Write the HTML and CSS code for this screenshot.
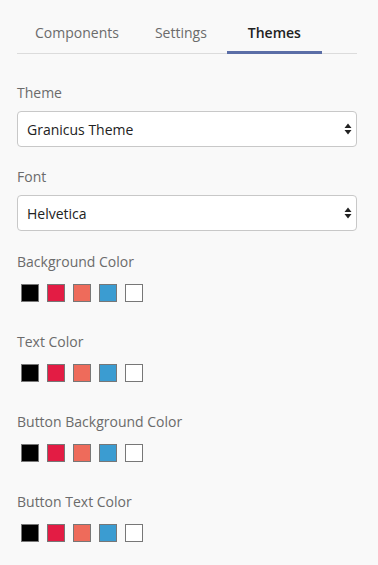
FILE: index.html
```html
<!DOCTYPE html>
<html lang="en">
<head>
  <meta charset="UTF-8">
  <meta name="viewport" content="width=device-width, initial-scale=1.0">
  <title>Themes</title>
  <link rel="stylesheet" href="styles.css">
</head>
<body>
  <div class="panel">
    <ul class="tabs">
      <li class="tab">Components</li>
      <li class="tab">Settings</li>
      <li class="tab active">Themes</li>
    </ul>

    <div class="field">
      <label class="field-label">Theme</label>
      <div class="select-wrap">
        <select class="select">
          <option>Granicus Theme</option>
        </select>
        <svg class="select-arrow" width="8" height="12" viewBox="0 0 8 12">
          <path d="M4 0.5 L7.5 5 L0.5 5 Z M4 11.5 L7.5 7 L0.5 7 Z" fill="#222"/>
        </svg>
      </div>
    </div>

    <div class="field">
      <label class="field-label">Font</label>
      <div class="select-wrap">
        <select class="select">
          <option>Helvetica</option>
        </select>
        <svg class="select-arrow" width="8" height="12" viewBox="0 0 8 12">
          <path d="M4 0.5 L7.5 5 L0.5 5 Z M4 11.5 L7.5 7 L0.5 7 Z" fill="#222"/>
        </svg>
      </div>
    </div>

    <div class="colors">
      <div class="field-label">Background Color</div>
      <div class="swatches">
        <span class="swatch black"></span>
        <span class="swatch red"></span>
        <span class="swatch salmon"></span>
        <span class="swatch blue"></span>
        <span class="swatch white"></span>
      </div>
    </div>

    <div class="colors">
      <div class="field-label">Text Color</div>
      <div class="swatches">
        <span class="swatch black"></span>
        <span class="swatch red"></span>
        <span class="swatch salmon"></span>
        <span class="swatch blue"></span>
        <span class="swatch white"></span>
      </div>
    </div>

    <div class="colors">
      <div class="field-label">Button Background Color</div>
      <div class="swatches">
        <span class="swatch black"></span>
        <span class="swatch red"></span>
        <span class="swatch salmon"></span>
        <span class="swatch blue"></span>
        <span class="swatch white"></span>
      </div>
    </div>

    <div class="colors">
      <div class="field-label">Button Text Color</div>
      <div class="swatches">
        <span class="swatch black"></span>
        <span class="swatch red"></span>
        <span class="swatch salmon"></span>
        <span class="swatch blue"></span>
        <span class="swatch white"></span>
      </div>
    </div>
  </div>
</body>
</html>
```

FILE: styles.css
```css
body {
  margin: 0;
  font-family: 'Open Sans', 'Liberation Sans', sans-serif;
  font-size: 14px;
  line-height: 20px;
  background-color: #f9f9f9;
  color: #222;
}
.panel {
  padding: 0 21px 0 17px;
}
.tabs {
  display: flex;
  list-style: none;
  margin: 0;
  padding: 0;
  border-bottom: 1px solid #dcdcdc;
}
.tab {
  padding: 23px 18px 8px;
  margin-bottom: -1px;
  border-bottom: 3px solid transparent;
  color: #6b6b6b;
}
.tab.active {
  color: #222;
  font-weight: 600;
  border-bottom-color: #5b6ea7;
  margin-left: 2px;
  padding-left: 21px;
  padding-right: 21px;
}
.field {
  margin-top: 29px;
}
.field + .field {
  margin-top: 20px;
}
.field-label {
  display: block;
  color: #6b6b6b;
}
.select-wrap {
  position: relative;
  margin-top: 8px;
}
.select {
  display: block;
  width: 100%;
  height: 36px;
  margin: 0;
  padding: 0 30px 0 9px;
  font-family: inherit;
  font-size: 14px;
  color: #222;
  background-color: #fff;
  border: 1px solid #c8c8c8;
  border-radius: 4px;
  -webkit-appearance: none;
  appearance: none;
}
.select-arrow {
  position: absolute;
  right: 5px;
  top: 12px;
  pointer-events: none;
}
.colors {
  margin-top: 21px;
}
.colors + .colors {
  margin-top: 30px;
}
.swatches {
  display: flex;
  gap: 8px;
  margin-top: 12px;
  padding-left: 4px;
}
.swatch {
  width: 16px;
  height: 16px;
  border: 1px solid #777;
}
.black { background-color: #000; }
.red { background-color: #e31c44; }
.salmon { background-color: #ee6b5b; }
.blue { background-color: #3b9cd1; }
.white { background-color: #fff; }
```
